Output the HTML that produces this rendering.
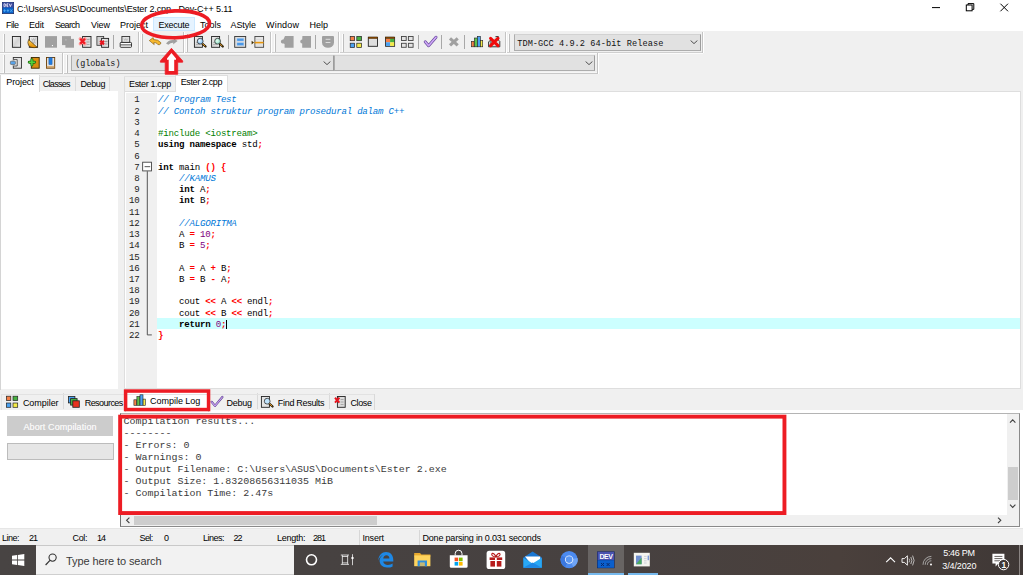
<!DOCTYPE html>
<html><head><meta charset="utf-8"><title>Dev-C++</title>
<style>
html,body{margin:0;padding:0;}
body{width:1023px;height:575px;overflow:hidden;position:relative;background:#f0f0f0;font-family:"Liberation Sans",sans-serif;font-size:9px;}
body div, body span.t, body svg{position:absolute;}
span.t{white-space:pre;}
.code{position:absolute;white-space:pre;font-family:"Liberation Mono",monospace;}
.code i{font-style:italic;}
.code b{font-weight:bold;}
</style></head><body>
<div style="left:0px;top:0px;width:1023px;height:30.7px;background:#fff;"></div>
<svg style="left:1.5px;top:2px" width="12" height="12" viewBox="0 0 12 12"><rect x=".3" y=".3" width="11.4" height="11.4" fill="#0a62c8" stroke="#1c2458" stroke-width=".7"/><rect x=".6" y=".6" width="10.8" height="4.9" fill="#3e4a9e"/>
<path d="M2 1.8V4.6M2 1.8H2.8Q3.7 1.8 3.7 3.2Q3.7 4.6 2.8 4.6H2M6.3 1.8H4.9V4.6H6.3M4.9 3.2H6M7.3 1.8L8.4 4.6L9.5 1.8" fill="none" stroke="#f4f4ff" stroke-width=".8"/>
<path d="M2.6 7.2V10M1.4 8.6H3.8M5.9 7.2V10M4.7 8.6H7.1M8.2 7.3L10.4 9.9M10.4 7.3L8.2 9.9" stroke="#58b0f4" stroke-width=".8"/></svg>
<span class="t" style="left:17px;top:2.90px;line-height:12px;font-size:9px;color:#000;font-family:'Liberation Sans',sans-serif;letter-spacing:-0.121px;">C:\Users\ASUS\Documents\Ester 2.cpp - Dev-C++ 5.11</span>
<svg style="left:925px;top:0" width="98" height="16" viewBox="0 0 98 16" fill="none" stroke="#000" stroke-width="1">
<path d="M7 7.6H15"/><rect x="41.3" y="5" width="5.8" height="5.8"/><path d="M43 5V3.6H48.8V9.4H47.2"/>
<path d="M75.4 3.7L83 11.3M83 3.7L75.4 11.3"/></svg>
<div style="left:153.2px;top:17.2px;width:41.6px;height:14.1px;background:#e5f3ff;border:1px solid #cce8ff;box-sizing:border-box;"></div>
<span class="t" style="left:6px;top:18.70px;line-height:12px;font-size:9px;color:#000;font-family:'Liberation Sans',sans-serif;letter-spacing:-0.505px;">File</span>
<span class="t" style="left:29px;top:18.70px;line-height:12px;font-size:9px;color:#000;font-family:'Liberation Sans',sans-serif;letter-spacing:-0.172px;">Edit</span>
<span class="t" style="left:55px;top:18.70px;line-height:12px;font-size:9px;color:#000;font-family:'Liberation Sans',sans-serif;letter-spacing:-0.706px;">Search</span>
<span class="t" style="left:91px;top:18.70px;line-height:12px;font-size:9px;color:#000;font-family:'Liberation Sans',sans-serif;letter-spacing:-0.120px;">View</span>
<span class="t" style="left:120px;top:18.70px;line-height:12px;font-size:9px;color:#000;font-family:'Liberation Sans',sans-serif;letter-spacing:-0.003px;">Project</span>
<span class="t" style="left:158.5px;top:18.70px;line-height:12px;font-size:9px;color:#000;font-family:'Liberation Sans',sans-serif;letter-spacing:-0.255px;">Execute</span>
<span class="t" style="left:200px;top:18.70px;line-height:12px;font-size:9px;color:#000;font-family:'Liberation Sans',sans-serif;letter-spacing:-0.004px;">Tools</span>
<span class="t" style="left:230.5px;top:18.70px;line-height:12px;font-size:9px;color:#000;font-family:'Liberation Sans',sans-serif;letter-spacing:-0.103px;">AStyle</span>
<span class="t" style="left:266px;top:18.70px;line-height:12px;font-size:9px;color:#000;font-family:'Liberation Sans',sans-serif;letter-spacing:0.197px;">Window</span>
<span class="t" style="left:309.5px;top:18.70px;line-height:12px;font-size:9px;color:#000;font-family:'Liberation Sans',sans-serif;letter-spacing:-0.005px;">Help</span>
<div style="left:0px;top:52px;width:703px;height:1px;background:#cfcfcf;"></div>
<div style="left:0px;top:53px;width:703px;height:1px;background:#fbfbfb;"></div>
<div style="left:2.8px;top:33.7px;width:1px;height:18px;background:#fdfdfd;"></div>
<div style="left:3.8px;top:33.7px;width:1px;height:18px;background:#bdbdbd;"></div>
<div style="left:141.4px;top:33.7px;width:1px;height:18px;background:#fdfdfd;"></div>
<div style="left:142.4px;top:33.7px;width:1px;height:18px;background:#bdbdbd;"></div>
<div style="left:186.20000000000002px;top:33.7px;width:1px;height:18px;background:#fdfdfd;"></div>
<div style="left:187.20000000000002px;top:33.7px;width:1px;height:18px;background:#bdbdbd;"></div>
<div style="left:274.0px;top:33.7px;width:1px;height:18px;background:#fdfdfd;"></div>
<div style="left:275.0px;top:33.7px;width:1px;height:18px;background:#bdbdbd;"></div>
<div style="left:342.2px;top:33.7px;width:1px;height:18px;background:#fdfdfd;"></div>
<div style="left:343.2px;top:33.7px;width:1px;height:18px;background:#bdbdbd;"></div>
<div style="left:508.4px;top:33.7px;width:1px;height:18px;background:#fdfdfd;"></div>
<div style="left:509.4px;top:33.7px;width:1px;height:18px;background:#bdbdbd;"></div>
<div style="left:138.2px;top:32px;width:1px;height:21px;background:#c4c4c4;"></div>
<div style="left:139.2px;top:32px;width:1px;height:21px;background:#fff;"></div>
<div style="left:182.6px;top:32px;width:1px;height:21px;background:#c4c4c4;"></div>
<div style="left:183.6px;top:32px;width:1px;height:21px;background:#fff;"></div>
<div style="left:270px;top:32px;width:1px;height:21px;background:#c4c4c4;"></div>
<div style="left:271px;top:32px;width:1px;height:21px;background:#fff;"></div>
<div style="left:338px;top:32px;width:1px;height:21px;background:#c4c4c4;"></div>
<div style="left:339px;top:32px;width:1px;height:21px;background:#fff;"></div>
<div style="left:505px;top:32px;width:1px;height:21px;background:#c4c4c4;"></div>
<div style="left:506px;top:32px;width:1px;height:21px;background:#fff;"></div>
<div style="left:701.6px;top:32px;width:1px;height:21px;background:#c4c4c4;"></div>
<div style="left:702.6px;top:32px;width:1px;height:21px;background:#fff;"></div>
<div style="left:113px;top:35px;width:1px;height:14px;background:#a8a8a8;"></div>
<div style="left:228px;top:35px;width:1px;height:14px;background:#a8a8a8;"></div>
<div style="left:315px;top:35px;width:1px;height:14px;background:#a8a8a8;"></div>
<div style="left:418px;top:35px;width:1px;height:14px;background:#a8a8a8;"></div>
<div style="left:441px;top:35px;width:1px;height:14px;background:#a8a8a8;"></div>
<div style="left:464px;top:35px;width:1px;height:14px;background:#a8a8a8;"></div>
<svg style="left:0;top:0" width="1023" height="80" viewBox="0 0 1023 80">
<defs>
<linearGradient id="pg" x1="0" y1="0" x2="1" y2="1"><stop offset="0" stop-color="#f4f4f4"/><stop offset=".5" stop-color="#d4d4d4"/><stop offset="1" stop-color="#ececec"/></linearGradient>
<linearGradient id="or" x1="0" y1="0" x2="0" y2="1"><stop offset="0" stop-color="#ffd35a"/><stop offset="1" stop-color="#e08a00"/></linearGradient>
<radialGradient id="lens" cx=".4" cy=".4" r=".7"><stop offset="0" stop-color="#e8f6ff"/><stop offset="1" stop-color="#6db4ee"/></radialGradient>
<radialGradient id="lensg" cx=".4" cy=".4" r=".7"><stop offset="0" stop-color="#e8fff0"/><stop offset="1" stop-color="#7fd6c0"/></radialGradient>
</defs>
<!-- new -->
<rect x="12.4" y="36.5" width="8.2" height="10.8" fill="url(#pg)" stroke="#222" stroke-width=".9"/>
<!-- open -->
<rect x="29.3" y="36.5" width="8.3" height="10.8" fill="url(#pg)" stroke="#222" stroke-width=".9"/>
<path d="M31.5 38.5l1 2 1-2 1 2 1-2M32.5 41.5l1 2 1-2 1 2" stroke="#999" stroke-width=".5" fill="none"/>
<path d="M28.6 39.6L37.2 47.3Q31 48.6 28.6 45.4Q27 42.6 28.6 39.6Z" fill="url(#or)" stroke="#3a2500" stroke-width=".6"/>
<!-- save gray -->
<rect x="45" y="36.1" width="12" height="11.6" fill="#a0a0a0"/><rect x="51.9" y="45" width="1.1" height="1.1" fill="#fff"/>
<!-- save all gray -->
<rect x="62" y="36.1" width="9" height="9" fill="#a0a0a0"/><rect x="65.4" y="38.9" width="8.6" height="8.8" fill="#a0a0a0"/><rect x="65.6" y="39" width=".7" height="1.6" fill="#c8c8c8"/>
<!-- close -->
<rect x="82.6" y="36.5" width="8.4" height="10.8" fill="url(#pg)" stroke="#222" stroke-width=".9"/>
<path d="M86.5 39.5h3M86.5 42h3M86.5 44.5h3" stroke="#888" stroke-width=".6"/>
<path d="M80.3 38.8L84.9 43.8M84.9 38.8L80.3 43.8" stroke="#ff9a9a" stroke-width="3.4" stroke-linecap="round"/>
<path d="M80.3 38.8L84.9 43.8M84.9 38.8L80.3 43.8" stroke="#ee1c24" stroke-width="2.3" stroke-linecap="butt"/>
<!-- close all -->
<rect x="96.9" y="36.5" width="6.8" height="8.8" fill="#cfcfcf" stroke="#333" stroke-width=".8"/>
<rect x="101.6" y="38.4" width="7" height="8.9" fill="url(#pg)" stroke="#222" stroke-width=".9"/>
<path d="M105 41.5h2.5M105 44h2.5" stroke="#777" stroke-width=".6"/>
<path d="M100.2 40.7L104 44.5M104 40.7L100.2 44.5" stroke="#e8141e" stroke-width="2.2" stroke-linecap="butt"/>
<!-- print -->
<rect x="121.9" y="36.5" width="7.8" height="6" fill="#e2e2e2" stroke="#333" stroke-width=".9"/>
<path d="M123.8 38.5l1 2 1-2 1 2 1-2" stroke="#999" stroke-width=".5" fill="none"/>
<rect x="120.2" y="42.4" width="11.3" height="4.9" rx=".8" fill="#fff" stroke="#222" stroke-width=".9"/>
<path d="M120.5 44.9h10.8" stroke="#333" stroke-width=".9"/>
<!-- undo -->
<path d="M149.3 40.6L153.2 37.6L153.6 39.6Q158 39.2 160.8 42.6Q161.2 44.2 159.4 44.7Q157.4 45 157.2 43.6Q155.6 42.4 153.8 42.6L154.2 44.6Z" fill="#f7b82e" stroke="#7a4f00" stroke-width=".6" stroke-linejoin="round"/>
<!-- redo gray -->
<path d="M177.6 41L174 38.6L173.6 40Q169 39.6 166 43.4L168.4 44.8Q170.6 42.6 173.4 42.8L173 44.6Z" fill="#a0a0a0"/>
<!-- find -->
<rect x="194.4" y="36.5" width="8" height="10.8" fill="url(#pg)" stroke="#222" stroke-width=".9"/>
<path d="M196 44.5h4M196 42.5h2" stroke="#999" stroke-width=".6"/>
<path d="M202.2 43.4L205.6 46.6" stroke="#1a1200" stroke-width="2.1" stroke-linecap="round"/>
<path d="M202.2 43.4L205 46" stroke="#f0a020" stroke-width="1" stroke-linecap="round"/>
<circle cx="200.2" cy="41.2" r="2.9" fill="url(#lens)" stroke="#333" stroke-width=".8"/>
<!-- replace -->
<rect x="211.6" y="36.5" width="8" height="10.8" fill="url(#pg)" stroke="#222" stroke-width=".9"/>
<path d="M213 44.5h4M213 42.5h2" stroke="#999" stroke-width=".6"/>
<path d="M219.6 43.4L222.8 46.6" stroke="#1a1200" stroke-width="2.1" stroke-linecap="round"/>
<path d="M219.6 43.4L222.2 46" stroke="#f0a020" stroke-width="1" stroke-linecap="round"/>
<circle cx="217.6" cy="41.2" r="2.9" fill="url(#lensg)" stroke="#333" stroke-width=".8"/>
<!-- goto func -->
<rect x="234.7" y="36.5" width="11" height="10.8" fill="#dedede" stroke="#333" stroke-width=".9"/>
<rect x="237" y="38.4" width="6.8" height="2.6" fill="#4a98e8" stroke="#9fc9f5" stroke-width=".4"/><rect x="237" y="42.8" width="6.8" height="2.6" fill="#4a98e8" stroke="#9fc9f5" stroke-width=".4"/>
<!-- goto line -->
<rect x="254.9" y="36.5" width="8.7" height="10.8" fill="#e6e6e6" stroke="#444" stroke-width=".9"/>
<path d="M255.3 39.6h8M255.3 45h8" stroke="#cfcfcf" stroke-width=".5"/>
<path d="M254.6 42.6H263.6" stroke="#e8960a" stroke-width="1.6"/>
<path d="M251.6 40.8L254 42.6L251.6 44.4Z" fill="#3a2a00"/>
<!-- gray icons -->
<path d="M285 36.1H293.6V47.7H284.6V44L283.6 43.4A2 2 0 1 1 283.4 39.6Z" fill="#a0a0a0"/>
<path d="M302.4 36.1H311V47.7H302.2V43.6A1.9 1.9 0 1 1 302.2 39.6Z" fill="#a0a0a0"/>
<path d="M323 36.1H333A1 1 0 0 1 334 37.1V42.5A6 5.3 0 0 1 322 42.5V37.1A1 1 0 0 1 323 36.1Z" fill="#a0a0a0"/>
<path d="M325.6 39.3H330.4M325.6 42.5H330.4" stroke="#e4e4e4" stroke-width=".9"/>
<!-- compile -->
<g stroke="#222" stroke-width=".7">
<rect x="350.2" y="36.4" width="4.4" height="4.3" fill="#f58048"/><rect x="356.8" y="36.4" width="4.7" height="4.3" fill="#46b040"/>
<rect x="350.2" y="43.2" width="4.4" height="4.3" fill="#4aa2f2"/><rect x="356.8" y="43.2" width="4.7" height="4.3" fill="#f4ea48"/>
</g>
<!-- run -->
<rect x="368.3" y="37.3" width="9.2" height="9" fill="#dedede" stroke="#222" stroke-width=".9"/>
<rect x="368.3" y="37" width="9.2" height="1.6" fill="#8a4a00" stroke="#3a2000" stroke-width=".4"/>
<!-- compile+run -->
<rect x="385.6" y="37.3" width="9" height="9" fill="#dedede" stroke="#222" stroke-width=".9"/>
<rect x="386" y="38.6" width="4.1" height="3.7" fill="#f58048"/><rect x="390.1" y="38.6" width="4.1" height="3.7" fill="#46b040"/>
<rect x="386" y="42.3" width="4.1" height="3.6" fill="#4aa2f2"/><rect x="390.1" y="42.3" width="4.1" height="3.6" fill="#f4ea48"/>
<rect x="385.6" y="37" width="9" height="1.6" fill="#8a4a00" stroke="#3a2000" stroke-width=".4"/>
<!-- rebuild -->
<g stroke="#444" stroke-width=".9" fill="#e4e4e4">
<rect x="401.5" y="36.5" width="4.7" height="4"/><rect x="408.4" y="36.5" width="4.7" height="4"/>
<rect x="401.5" y="43.3" width="4.7" height="4"/><rect x="408.4" y="43.3" width="4.7" height="4"/>
</g>
<!-- check -->
<path d="M425.2 41.8L428.6 45.7L436 37.2" fill="none" stroke="#66489a" stroke-width="2.9" stroke-linecap="round" stroke-linejoin="round"/>
<path d="M425.2 41.8L428.6 45.7L436 37.2" fill="none" stroke="#cfa8f8" stroke-width="1.6" stroke-linecap="round" stroke-linejoin="round"/>
<!-- gray x -->
<path d="M450 38.3L457.7 45.4M457.7 38.3L450 45.4" stroke="#a0a0a0" stroke-width="3.1"/>
<!-- chart -->
<g stroke="#222" stroke-width=".6">
<rect x="471.3" y="41.3" width="2.8" height="5.5" fill="#f58048"/><rect x="474.3" y="38" width="3" height="8.8" fill="#5cc04c"/>
<rect x="477.4" y="36.3" width="3" height="10.5" fill="#4aa2f2"/><rect x="480.5" y="40.6" width="2.2" height="6.2" fill="#f4ea48"/>
</g>
<!-- chart red x -->
<path d="M488.6 46.8V42L491 39.5V46.8M495.5 36.6H498.4V40L499.8 41.5V46.8H488.6" fill="#ddd" stroke="#222" stroke-width=".9"/>
<path d="M490.6 38.4L498 45.6M498 38.4L490.6 45.6" stroke="#f00a0a" stroke-width="3.1" stroke-linecap="round"/>
</svg>
<div style="left:0px;top:73px;width:598px;height:1px;background:#c8c8c8;"></div>
<div style="left:0px;top:72px;width:598px;height:1px;background:#f6f6f6;"></div>
<div style="left:2.8px;top:54.7px;width:1px;height:18px;background:#fdfdfd;"></div>
<div style="left:3.8px;top:54.7px;width:1px;height:18px;background:#bdbdbd;"></div>
<div style="left:65.80000000000001px;top:54.7px;width:1px;height:18px;background:#fdfdfd;"></div>
<div style="left:66.80000000000001px;top:54.7px;width:1px;height:18px;background:#bdbdbd;"></div>
<div style="left:61.8px;top:53px;width:1px;height:21px;background:#c4c4c4;"></div>
<div style="left:62.8px;top:53px;width:1px;height:21px;background:#fff;"></div>
<div style="left:596.6px;top:53px;width:1px;height:21px;background:#c4c4c4;"></div>
<div style="left:597.6px;top:53px;width:1px;height:21px;background:#fff;"></div>
<div style="left:71px;top:54.9px;width:262.8px;height:15.8px;background:#e1e1e1;border:1px solid #adadad;border-top-color:#d2d2d2;border-right-color:#9c9c9c;box-sizing:border-box;"></div>
<svg style="left:323.40px;top:60.90px" width="8" height="5" viewBox="0 0 8 5"><path d="M.6 .5L4 3.6L7.4 .5" fill="none" stroke="#505050" stroke-width="1"/></svg>
<span class="t" style="left:75.2px;top:58.10px;line-height:12px;font-size:8.4px;color:#111;font-family:'Liberation Mono',monospace;">(globals)</span>
<div style="left:334.2px;top:54.9px;width:261px;height:15.8px;background:#e1e1e1;border:1px solid #adadad;border-top-color:#d2d2d2;border-right-color:#9c9c9c;box-sizing:border-box;"></div>
<svg style="left:584.80px;top:60.90px" width="8" height="5" viewBox="0 0 8 5"><path d="M.6 .5L4 3.6L7.4 .5" fill="none" stroke="#505050" stroke-width="1"/></svg>
<div style="left:514px;top:34px;width:186.5px;height:16.5px;background:#e1e1e1;border:1px solid #adadad;border-top-color:#d2d2d2;border-right-color:#9c9c9c;box-sizing:border-box;"></div>
<svg style="left:690.10px;top:40.35px" width="8" height="5" viewBox="0 0 8 5"><path d="M.6 .5L4 3.6L7.4 .5" fill="none" stroke="#505050" stroke-width="1"/></svg>
<span class="t" style="left:517.2px;top:37.55px;line-height:12px;font-size:8.6px;color:#111;font-family:'Liberation Mono',monospace;letter-spacing:0.063px;">TDM-GCC 4.9.2 64-bit Release</span>
<svg style="left:0;top:0" width="80" height="80" viewBox="0 0 80 80">
<rect x="13.3" y="57.5" width="8.2" height="10.7" fill="#e2e2e2" stroke="#333" stroke-width=".9"/>
<rect x="13.3" y="59.5" width="4" height="6.6" fill="#f0f0f0"/>
<path d="M13.3 59.6H17.2V66H13.3" fill="none" stroke="#333" stroke-width=".8"/>
<rect x="10.4" y="61.2" width="5" height="3.2" rx=".6" fill="#5aa6ee" stroke="#555" stroke-width=".6"/>
<rect x="31.3" y="57.5" width="7.9" height="10.7" fill="#d98c10" stroke="#3a2500" stroke-width=".9"/>
<path d="M31.9 59.6V65M29.2 62.3H34.6" stroke="#1d6b12" stroke-width="2.9" stroke-linecap="round"/>
<path d="M31.9 59.7V64.9M29.3 62.3H34.5" stroke="#55d23c" stroke-width="1.6" stroke-linecap="round"/>
<rect x="46.5" y="57.5" width="8.2" height="10.7" fill="#e0e0e0" stroke="#6a3c00" stroke-width=".9"/>
<path d="M46.6 67H54.6" stroke="#c88a3a" stroke-width="1.2"/>
<rect x="48.9" y="57.6" width="3.2" height="7" fill="#1f7ce0" stroke="#0f4a9a" stroke-width=".4"/>
</svg>
<div style="left:0px;top:91px;width:118px;height:298px;background:#fff;"></div>
<div style="left:0px;top:74.5px;width:38.6px;height:17px;background:#fff;border-right:1px solid #d9d9d9;"></div>
<div style="left:75px;top:76px;width:1px;height:15px;background:#dcdcdc;"></div>
<div style="left:109.3px;top:76px;width:1px;height:15px;background:#dcdcdc;"></div>
<div style="left:39px;top:75.6px;width:71px;height:1px;background:#e2e2e2;"></div>
<div style="left:0px;top:74.5px;width:0.8px;height:315px;background:#d4d4d4;"></div>
<span class="t" style="left:6.3px;top:75.60px;line-height:12px;font-size:9px;color:#000;font-family:'Liberation Sans',sans-serif;letter-spacing:-0.103px;">Project</span>
<span class="t" style="left:42.8px;top:78.10px;line-height:12px;font-size:9px;color:#000;font-family:'Liberation Sans',sans-serif;letter-spacing:-0.719px;">Classes</span>
<span class="t" style="left:80.5px;top:78.10px;line-height:12px;font-size:9px;color:#000;font-family:'Liberation Sans',sans-serif;letter-spacing:-0.383px;">Debug</span>
<div style="left:124px;top:90.8px;width:897.4px;height:298.4px;background:#fff;border:1px solid #dedede;box-sizing:border-box;"></div>
<div style="left:175px;top:74.8px;width:53.2px;height:17.5px;background:#fff;border:1px solid #dedede;border-bottom:none;box-sizing:border-box;"></div>
<div style="left:124.4px;top:76px;width:1px;height:15px;background:#dcdcdc;"></div>
<div style="left:124.4px;top:75.8px;width:51px;height:1px;background:#e2e2e2;"></div>
<span class="t" style="left:129px;top:78.10px;line-height:12px;font-size:9px;color:#000;font-family:'Liberation Sans',sans-serif;letter-spacing:-0.333px;">Ester 1.cpp</span>
<span class="t" style="left:180.7px;top:75.60px;line-height:12px;font-size:9px;color:#000;font-family:'Liberation Sans',sans-serif;letter-spacing:-0.373px;">Ester 2.cpp</span>
<div style="left:126px;top:93px;width:30.5px;height:295px;background:#f0f0f0;"></div>
<div style="left:157px;top:318.2px;width:863.4px;height:10.9px;background:#ccffff;"></div>
<div class="code" style="left:134.36px;top:94.40px;font-size:9.1px;letter-spacing:-0.217px;line-height:11.224px;color:#222">1</div>
<div class="code" style="left:158px;top:94.40px;font-size:9.1px;letter-spacing:-0.217px;line-height:11.224px;color:#000"><i style="color:#0078d7">// Program Test</i></div>
<div class="code" style="left:134.36px;top:105.62px;font-size:9.1px;letter-spacing:-0.217px;line-height:11.224px;color:#222">2</div>
<div class="code" style="left:158px;top:105.62px;font-size:9.1px;letter-spacing:-0.217px;line-height:11.224px;color:#000"><i style="color:#0078d7">// Contoh struktur program prosedural dalam C++</i></div>
<div class="code" style="left:134.36px;top:116.85px;font-size:9.1px;letter-spacing:-0.217px;line-height:11.224px;color:#222">3</div>
<div class="code" style="left:134.36px;top:128.07px;font-size:9.1px;letter-spacing:-0.217px;line-height:11.224px;color:#222">4</div>
<div class="code" style="left:158px;top:128.07px;font-size:9.1px;letter-spacing:-0.217px;line-height:11.224px;color:#000"><span style="color:#008000">#include &lt;iostream&gt;</span></div>
<div class="code" style="left:134.36px;top:139.30px;font-size:9.1px;letter-spacing:-0.217px;line-height:11.224px;color:#222">5</div>
<div class="code" style="left:158px;top:139.30px;font-size:9.1px;letter-spacing:-0.217px;line-height:11.224px;color:#000"><b>using namespace</b> std<b style="color:#ff0000">;</b></div>
<div class="code" style="left:134.36px;top:150.52px;font-size:9.1px;letter-spacing:-0.217px;line-height:11.224px;color:#222">6</div>
<div class="code" style="left:134.36px;top:161.74px;font-size:9.1px;letter-spacing:-0.217px;line-height:11.224px;color:#222">7</div>
<div class="code" style="left:158px;top:161.74px;font-size:9.1px;letter-spacing:-0.217px;line-height:11.224px;color:#000"><b>int</b> main <b style="color:#ff0000">()</b> <b style="color:#ff0000">{</b></div>
<div class="code" style="left:134.36px;top:172.97px;font-size:9.1px;letter-spacing:-0.217px;line-height:11.224px;color:#222">8</div>
<div class="code" style="left:158px;top:172.97px;font-size:9.1px;letter-spacing:-0.217px;line-height:11.224px;color:#000">    <i style="color:#0078d7">//KAMUS</i></div>
<div class="code" style="left:134.36px;top:184.19px;font-size:9.1px;letter-spacing:-0.217px;line-height:11.224px;color:#222">9</div>
<div class="code" style="left:158px;top:184.19px;font-size:9.1px;letter-spacing:-0.217px;line-height:11.224px;color:#000">    <b>int</b> A<b style="color:#ff0000">;</b></div>
<div class="code" style="left:129.11px;top:195.42px;font-size:9.1px;letter-spacing:-0.217px;line-height:11.224px;color:#222">10</div>
<div class="code" style="left:158px;top:195.42px;font-size:9.1px;letter-spacing:-0.217px;line-height:11.224px;color:#000">    <b>int</b> B<b style="color:#ff0000">;</b></div>
<div class="code" style="left:129.11px;top:206.64px;font-size:9.1px;letter-spacing:-0.217px;line-height:11.224px;color:#222">11</div>
<div class="code" style="left:129.11px;top:217.86px;font-size:9.1px;letter-spacing:-0.217px;line-height:11.224px;color:#222">12</div>
<div class="code" style="left:158px;top:217.86px;font-size:9.1px;letter-spacing:-0.217px;line-height:11.224px;color:#000">    <i style="color:#0078d7">//ALGORITMA</i></div>
<div class="code" style="left:129.11px;top:229.09px;font-size:9.1px;letter-spacing:-0.217px;line-height:11.224px;color:#222">13</div>
<div class="code" style="left:158px;top:229.09px;font-size:9.1px;letter-spacing:-0.217px;line-height:11.224px;color:#000">    A <b style="color:#ff0000">=</b> <span style="color:#800080">10</span><b style="color:#ff0000">;</b></div>
<div class="code" style="left:129.11px;top:240.31px;font-size:9.1px;letter-spacing:-0.217px;line-height:11.224px;color:#222">14</div>
<div class="code" style="left:158px;top:240.31px;font-size:9.1px;letter-spacing:-0.217px;line-height:11.224px;color:#000">    B <b style="color:#ff0000">=</b> <span style="color:#800080">5</span><b style="color:#ff0000">;</b></div>
<div class="code" style="left:129.11px;top:251.54px;font-size:9.1px;letter-spacing:-0.217px;line-height:11.224px;color:#222">15</div>
<div class="code" style="left:129.11px;top:262.76px;font-size:9.1px;letter-spacing:-0.217px;line-height:11.224px;color:#222">16</div>
<div class="code" style="left:158px;top:262.76px;font-size:9.1px;letter-spacing:-0.217px;line-height:11.224px;color:#000">    A <b style="color:#ff0000">=</b> A <b style="color:#ff0000">+</b> B<b style="color:#ff0000">;</b></div>
<div class="code" style="left:129.11px;top:273.98px;font-size:9.1px;letter-spacing:-0.217px;line-height:11.224px;color:#222">17</div>
<div class="code" style="left:158px;top:273.98px;font-size:9.1px;letter-spacing:-0.217px;line-height:11.224px;color:#000">    B <b style="color:#ff0000">=</b> B <b style="color:#ff0000">-</b> A<b style="color:#ff0000">;</b></div>
<div class="code" style="left:129.11px;top:285.21px;font-size:9.1px;letter-spacing:-0.217px;line-height:11.224px;color:#222">18</div>
<div class="code" style="left:129.11px;top:296.43px;font-size:9.1px;letter-spacing:-0.217px;line-height:11.224px;color:#222">19</div>
<div class="code" style="left:158px;top:296.43px;font-size:9.1px;letter-spacing:-0.217px;line-height:11.224px;color:#000">    cout <b style="color:#ff0000">&lt;&lt;</b> A <b style="color:#ff0000">&lt;&lt;</b> endl<b style="color:#ff0000">;</b></div>
<div class="code" style="left:129.11px;top:307.66px;font-size:9.1px;letter-spacing:-0.217px;line-height:11.224px;color:#222">20</div>
<div class="code" style="left:158px;top:307.66px;font-size:9.1px;letter-spacing:-0.217px;line-height:11.224px;color:#000">    cout <b style="color:#ff0000">&lt;&lt;</b> B <b style="color:#ff0000">&lt;&lt;</b> endl<b style="color:#ff0000">;</b></div>
<div class="code" style="left:129.11px;top:318.88px;font-size:9.1px;letter-spacing:-0.217px;line-height:11.224px;color:#222">21</div>
<div class="code" style="left:158px;top:318.88px;font-size:9.1px;letter-spacing:-0.217px;line-height:11.224px;color:#000">    <b>return</b> <span style="color:#800080">0</span><b style="color:#ff0000">;</b></div>
<div class="code" style="left:129.11px;top:330.10px;font-size:9.1px;letter-spacing:-0.217px;line-height:11.224px;color:#222">22</div>
<div class="code" style="left:158px;top:330.10px;font-size:9.1px;letter-spacing:-0.217px;line-height:11.224px;color:#000"><b style="color:#ff0000">}</b></div>
<div style="left:226.2px;top:319.6px;width:1px;height:9.2px;background:#000;"></div>
<svg style="left:140px;top:90px" width="16" height="260" viewBox="140 90 16 260" fill="none" stroke="#444" stroke-width=".9">
<rect x="142.65" y="162.21" width="8.9" height="8.7" fill="#fff"/><path d="M144.6 166.66H150.2"/>
<path d="M147.3 171.26V334.92H151.8"/></svg>
<div style="left:0px;top:410px;width:1023px;height:118.3px;background:#fff;"></div>
<div style="left:125px;top:391px;width:83.5px;height:21px;background:#fff;border:1px solid #d9d9d9;border-bottom:none;box-sizing:border-box;"></div>
<div style="left:63px;top:393px;width:1px;height:16px;background:#d9d9d9;"></div>
<div style="left:256.5px;top:393px;width:1px;height:16px;background:#d9d9d9;"></div>
<div style="left:329px;top:393px;width:1px;height:16px;background:#d9d9d9;"></div>
<div style="left:374px;top:394px;width:1px;height:16px;background:#d9d9d9;"></div>
<div style="left:1px;top:393.6px;width:373px;height:1px;background:#e2e2e2;"></div>
<div style="left:0.5px;top:394px;width:1px;height:16px;background:#e2e2e2;"></div>
<span class="t" style="left:22.9px;top:396.60px;line-height:12px;font-size:9px;color:#000;font-family:'Liberation Sans',sans-serif;letter-spacing:-0.045px;">Compiler</span>
<span class="t" style="left:84.7px;top:396.60px;line-height:12px;font-size:9px;color:#000;font-family:'Liberation Sans',sans-serif;letter-spacing:-0.554px;">Resources</span>
<span class="t" style="left:150.1px;top:395.20px;line-height:12px;font-size:9px;color:#000;font-family:'Liberation Sans',sans-serif;letter-spacing:-0.033px;">Compile Log</span>
<span class="t" style="left:226.5px;top:396.60px;line-height:12px;font-size:9px;color:#000;font-family:'Liberation Sans',sans-serif;letter-spacing:-0.258px;">Debug</span>
<span class="t" style="left:277.8px;top:396.60px;line-height:12px;font-size:9px;color:#000;font-family:'Liberation Sans',sans-serif;letter-spacing:-0.303px;">Find Results</span>
<span class="t" style="left:350.5px;top:396.60px;line-height:12px;font-size:9px;color:#000;font-family:'Liberation Sans',sans-serif;letter-spacing:-0.379px;">Close</span>
<svg style="left:0;top:390px" width="380" height="24" viewBox="0 390 380 24">
<g stroke="#222" stroke-width=".7">
<rect x="6.4" y="396.2" width="4.4" height="4.3" fill="#f58048"/><rect x="13" y="396.2" width="4.7" height="4.3" fill="#46b040"/>
<rect x="6.4" y="403" width="4.4" height="4.3" fill="#4aa2f2"/><rect x="13" y="403" width="4.7" height="4.3" fill="#f4ea48"/>
</g>
<rect x="68.4" y="396.4" width="6.5" height="6.5" fill="#4aa2f2" stroke="#222" stroke-width=".8"/>
<rect x="70.6" y="398.6" width="6.5" height="6.5" fill="#46b040" stroke="#222" stroke-width=".8"/>
<rect x="72.8" y="400.8" width="6.5" height="6.5" fill="#e8321e" stroke="#222" stroke-width=".8"/>
<g stroke="#222" stroke-width=".6">
<rect x="133.9" y="399.8" width="2.8" height="5.5" fill="#f58048"/><rect x="136.9" y="396.5" width="3" height="8.8" fill="#5cc04c"/>
<rect x="140" y="394.8" width="3" height="10.5" fill="#4aa2f2"/><rect x="143.1" y="399.1" width="2.2" height="6.2" fill="#f4ea48"/>
</g>
<path d="M211.6 401.8L215 405.9L222.4 397" fill="none" stroke="#5b3f8c" stroke-width="2.2" stroke-linecap="round" stroke-linejoin="round"/>
<path d="M211.6 401.8L215 405.9L222.4 397" fill="none" stroke="#c9a2f4" stroke-width="1.1" stroke-linecap="round" stroke-linejoin="round"/>
<rect x="261.4" y="396.5" width="8" height="10.8" fill="#e4e4e4" stroke="#222" stroke-width=".9"/>
<path d="M269.2 403.4L272.6 406.6" stroke="#1a1200" stroke-width="2.1" stroke-linecap="round"/>
<path d="M269.2 403.4L272 406" stroke="#f0a020" stroke-width="1" stroke-linecap="round"/>
<circle cx="267.2" cy="401.2" r="2.9" fill="#bfe2fa" stroke="#333" stroke-width=".8"/>
<rect x="337.4" y="396.5" width="7.8" height="10.8" fill="#dcdcdc" stroke="#222" stroke-width=".9"/>
<path d="M340.6 399.5h3M340.6 402h3M340.6 404.5h3" stroke="#888" stroke-width=".6"/>
<path d="M335 397.8L339.4 402.6M339.4 397.8L335 402.6" stroke="#e8141e" stroke-width="2" stroke-linecap="butt"/>
</svg>
<div style="left:6.6px;top:416.3px;width:106.4px;height:20.2px;background:#cccccc;"></div>
<span class="t" style="left:23.5px;top:421.40px;line-height:12px;font-size:9px;color:#f4f4f4;font-family:'Liberation Sans',sans-serif;letter-spacing:0.091px;text-shadow:0 0 .6px #fff;">Abort Compilation</span>
<div style="left:6.6px;top:442.8px;width:107px;height:17.2px;background:#e6e6e6;border:1px solid #bcbcbc;box-sizing:border-box;"></div>
<div style="left:119.6px;top:412.8px;width:900.4px;height:114px;background:#fff;border:1px solid #8a8a8a;border-top-color:#b4b4b4;border-left-color:#707070;box-sizing:border-box;"></div>
<div class="code" style="left:123.6px;top:415.50px;font-size:9.98px;line-height:12px;color:#3a3a3a">Compilation results...</div>
<div class="code" style="left:123.6px;top:427.50px;font-size:9.98px;line-height:12px;color:#3a3a3a">--------</div>
<div class="code" style="left:123.6px;top:439.50px;font-size:9.98px;line-height:12px;color:#3a3a3a">- Errors: 0</div>
<div class="code" style="left:123.6px;top:451.50px;font-size:9.98px;line-height:12px;color:#3a3a3a">- Warnings: 0</div>
<div class="code" style="left:123.6px;top:463.50px;font-size:9.98px;line-height:12px;color:#3a3a3a">- Output Filename: C:\Users\ASUS\Documents\Ester 2.exe</div>
<div class="code" style="left:123.6px;top:475.50px;font-size:9.98px;line-height:12px;color:#3a3a3a">- Output Size: 1.83208656311035 MiB</div>
<div class="code" style="left:123.6px;top:487.50px;font-size:9.98px;line-height:12px;color:#3a3a3a">- Compilation Time: 2.47s</div>
<div style="left:1006.5px;top:413.5px;width:12.5px;height:101px;background:#f0f0f0;"></div>
<div style="left:1007.5px;top:467px;width:10.5px;height:32.5px;background:#cdcdcd;"></div>
<div style="left:121px;top:514.5px;width:898px;height:11.5px;background:#f0f0f0;"></div>
<div style="left:134px;top:515.5px;width:243px;height:9.5px;background:#cdcdcd;"></div>
<svg style="left:120px;top:412px" width="900" height="115" viewBox="120 412 900 115" fill="none" stroke="#404040" stroke-width="1.1">
<path d="M1010 422.6L1012.7 419.8L1015.4 422.6"/><path d="M1010 504.6L1012.7 507.4L1015.4 504.6"/>
<path d="M129.4 517.6L126.6 520.3L129.4 523"/><path d="M998 517.6L1000.8 520.3L998 523"/></svg>
<div style="left:0px;top:528.3px;width:1023px;height:18px;background:#f0f0f0;border-top:1px solid #e6e6e6;box-sizing:border-box;"></div>
<div style="left:359px;top:530px;width:1px;height:15px;background:#d7d7d7;"></div>
<div style="left:419px;top:530px;width:1px;height:15px;background:#d7d7d7;"></div>
<span class="t" style="left:2px;top:532.40px;line-height:12px;font-size:9px;color:#000;font-family:'Liberation Sans',sans-serif;letter-spacing:-0.508px;">Line:</span>
<span class="t" style="left:29px;top:532.40px;line-height:12px;font-size:9px;color:#000;font-family:'Liberation Sans',sans-serif;letter-spacing:-1.016px;">21</span>
<span class="t" style="left:72.5px;top:532.40px;line-height:12px;font-size:9px;color:#000;font-family:'Liberation Sans',sans-serif;letter-spacing:-0.339px;">Col:</span>
<span class="t" style="left:97px;top:532.40px;line-height:12px;font-size:9px;color:#000;font-family:'Liberation Sans',sans-serif;letter-spacing:-1.016px;">14</span>
<span class="t" style="left:139.5px;top:532.40px;line-height:12px;font-size:9px;color:#000;font-family:'Liberation Sans',sans-serif;letter-spacing:-0.605px;">Sel:</span>
<span class="t" style="left:164px;top:532.40px;line-height:12px;font-size:9px;color:#000;font-family:'Liberation Sans',sans-serif;letter-spacing:-0.416px;">0</span>
<span class="t" style="left:203px;top:532.40px;line-height:12px;font-size:9px;color:#000;font-family:'Liberation Sans',sans-serif;letter-spacing:-0.506px;">Lines:</span>
<span class="t" style="left:233.5px;top:532.40px;line-height:12px;font-size:9px;color:#000;font-family:'Liberation Sans',sans-serif;letter-spacing:-1.016px;">22</span>
<span class="t" style="left:277px;top:532.40px;line-height:12px;font-size:9px;color:#000;font-family:'Liberation Sans',sans-serif;letter-spacing:-0.255px;">Length:</span>
<span class="t" style="left:313px;top:532.40px;line-height:12px;font-size:9px;color:#000;font-family:'Liberation Sans',sans-serif;letter-spacing:-1.016px;">281</span>
<span class="t" style="left:362.5px;top:532.40px;line-height:12px;font-size:9px;color:#000;font-family:'Liberation Sans',sans-serif;letter-spacing:-0.203px;">Insert</span>
<span class="t" style="left:422.5px;top:532.40px;line-height:12px;font-size:9px;color:#000;font-family:'Liberation Sans',sans-serif;letter-spacing:-0.200px;">Done parsing in 0.031 seconds</span>
<div style="left:0px;top:545.4px;width:1023px;height:30px;background:linear-gradient(90deg,#484443 0%,#474241 30%,#474140 62%,#4a403c 82%,#3f3836 100%);"></div>
<div style="left:36px;top:545.4px;width:257.7px;height:29.6px;background:#f2f2f2;border-top:1px solid #c9c9c9;border-bottom:1px solid #cfcfcf;box-sizing:border-box;"></div>
<div style="left:588.2px;top:545.4px;width:35.7px;height:30px;background:#686463;"></div>
<div style="left:588.2px;top:573.4px;width:35.7px;height:1.6px;background:#76b9ed;"></div>
<div style="left:627.8px;top:573.4px;width:29.9px;height:1.6px;background:#76b9ed;"></div>
<div style="left:1019px;top:545px;width:1px;height:30px;background:#8a8482;"></div>
<span class="t" style="left:66px;top:553.90px;line-height:14px;font-size:11px;color:#3a3a3a;font-family:'Liberation Sans',sans-serif;letter-spacing:-0.096px;">Type here to search</span>
<span class="t" style="left:943.2px;top:547.40px;line-height:12px;font-size:9px;color:#fff;font-family:'Liberation Sans',sans-serif;letter-spacing:-0.289px;">5:46 PM</span>
<span class="t" style="left:942.3px;top:560.20px;line-height:12px;font-size:9px;color:#fff;font-family:'Liberation Sans',sans-serif;letter-spacing:-0.121px;">3/4/2020</span>
<svg style="left:0;top:545px" width="1023" height="30" viewBox="0 545 1023 30">
<!-- windows logo -->
<g fill="#fff"><path d="M12 555.7L17 555V559.6H12Z"/><path d="M17.8 554.9L24.3 554V559.6H17.8Z"/><path d="M12 560.4H17V565L12 564.3Z"/><path d="M17.8 560.4H24.3V566L17.8 565.1Z"/></g>
<!-- search icon -->
<circle cx="52.6" cy="557.6" r="3.6" fill="none" stroke="#333" stroke-width="1.1"/><path d="M50 560.4L45.6 565" stroke="#333" stroke-width="1.2"/>
<!-- cortana -->
<circle cx="311.5" cy="559.8" r="5" fill="none" stroke="#fff" stroke-width="1.6"/>
<!-- task view -->
<g fill="none" stroke="#f0f0f0" stroke-width=".8"><rect x="342.3" y="556.4" width="5.4" height="6.5"/><path d="M340.8 555H349M340.8 564.4H349M342.3 555V556.4M347.7 555V556.4M342.3 563V564.4M347.7 563V564.4M352.5 554.2V565.2" /></g><circle cx="352.5" cy="558" r="1.2" fill="#fff"/>
<!-- edge -->
<path d="M378.2 560.6C378.6 555 382 551.9 386 551.9C390.6 551.9 393.4 555.4 393.3 560.2V561.6H383.2C383.4 564 385.6 565 387.8 565C389.8 565 391.4 564.4 392.6 563.6V566.4C391.2 567.2 389.4 567.6 387 567.6C382.4 567.6 379.6 564.6 379.6 560.6C379.6 558.4 380.8 556.4 382.8 555.2C381 555.6 379.2 557.6 378.2 560.6ZM383.2 558.6H389.4C389.4 556.6 388.4 555.2 386.4 555.2C384.6 555.2 383.4 556.6 383.2 558.6Z" fill="#1e88e5"/>
<!-- folder -->
<path d="M414.2 553H420L421.4 554.6H430.4V556.4H414.2Z" fill="#e8a92e"/>
<rect x="414.2" y="555.4" width="16.2" height="10.8" fill="#ffd45e"/>
<path d="M417.6 566.2V560.4H427V566.2H424.8V562.6H419.8V566.2Z" fill="#2f8fdd"/>
<rect x="419.8" y="562.6" width="5" height="3.6" fill="#1565c0" opacity=".25"/>
<!-- store -->
<path d="M455.2 555.4V553.6A3.4 3.4 0 0 1 462 553.6V555.4" fill="none" stroke="#fff" stroke-width="1"/>
<path d="M449.8 555.2H467.6V566.4A1.4 1.4 0 0 1 466.2 567.8H451.2A1.4 1.4 0 0 1 449.8 566.4Z" fill="#fff"/>
<rect x="454.6" y="557.6" width="3.6" height="3.6" fill="#f25022"/><rect x="459" y="557.6" width="3.6" height="3.6" fill="#7fba00"/>
<rect x="454.6" y="562" width="3.6" height="3.6" fill="#00a4ef"/><rect x="459" y="562" width="3.6" height="3.6" fill="#ffb900"/>
<!-- gift -->
<rect x="486.6" y="550.8" width="18.6" height="18.2" rx="2.6" fill="#fff"/>
<g fill="#b71c1c"><rect x="489.6" y="557.4" width="5.4" height="2.6"/><rect x="496.8" y="557.4" width="5.4" height="2.6"/><rect x="490.4" y="561" width="4.6" height="5.6"/><rect x="496.8" y="561" width="4.6" height="5.6"/></g>
<path d="M495.9 557C493 556.6 491.2 555.4 491.8 554C492.6 552.6 495 553.6 495.9 557ZM495.9 557C498.8 556.6 500.6 555.4 500 554C499.2 552.6 496.8 553.6 495.9 557Z" fill="none" stroke="#b71c1c" stroke-width="1.1"/>
<!-- mail -->
<path d="M523.4 557.6L532.6 551.4L541.8 557.6V567.8H523.4Z" fill="#1976d2"/>
<path d="M525 556.6H540.2V562L532.6 566Z" fill="#fff"/>
<path d="M523.4 557.8L532.6 563.4L541.8 557.8V567.8H523.4Z" fill="#29a8f4"/>
<path d="M523.4 567.8L532.6 562.6L541.8 567.8Z" fill="#1e88e5"/>
<!-- chromium -->
<circle cx="569.1" cy="559.6" r="8.6" fill="#4c8bf0"/>
<path d="M569.1 559.6L561.6 555.4A8.6 8.6 0 0 0 565 567.2Z" fill="#3b78e0"/>
<path d="M569.1 559.6L573.4 567A8.6 8.6 0 0 0 577.6 558Z" fill="#6fa4f5"/>
<circle cx="569.1" cy="559.6" r="4.2" fill="#e8f0fe"/><circle cx="569.1" cy="559.6" r="3.3" fill="#5a96f2"/>
<!-- dev icon -->
<rect x="597" y="551.4" width="17.6" height="16.8" fill="#13265c"/>
<rect x="597.6" y="551.8" width="16.4" height="8.4" fill="#4a52ae"/>
<rect x="597.6" y="560.2" width="16.4" height="7.6" fill="#0b5fcc"/>
<path d="M601 563L604 566M604 563L601 566M606.6 563L609.6 566M609.6 563L606.6 566" stroke="#0b2a6a" stroke-width="1"/>
<!-- other app -->
<rect x="633.8" y="552.8" width="16" height="13.6" fill="#f4f4f0"/>
<rect x="636" y="555.6" width="5.6" height="8.6" fill="#6f8fd0"/><path d="M636 564.2L641.6 557.6V564.2Z" fill="#4aa860"/>
<path d="M644 556.4h2.6M644 558.6h2.6M644 560.8h2.6M644 563h2.6" stroke="#c4c8d4" stroke-width=".8"/><rect x="647.6" y="555.6" width="1.4" height="4.6" fill="#7a9ad8"/>
<!-- tray -->
<path d="M886.2 562.2L890.6 557.8L895 562.2" fill="none" stroke="#fff" stroke-width="1.1"/>
<path d="M902 558.6H904.4L907.4 555.8V565.2L904.4 562.4H902Z" fill="none" stroke="#fff" stroke-width=".9"/>
<path d="M909 558.6Q910.4 560.5 909 562.4M910.8 557Q913 560.5 910.8 564M912.6 555.6Q915.6 560.5 912.6 565.4" fill="none" stroke="#d8d8d8" stroke-width=".8"/>
<circle cx="931" cy="564.4" r="1" fill="#fff"/>
<path d="M927.4 564.8A3.8 3.8 0 0 1 931.4 560.8M925.2 564.8A6 6 0 0 1 931.4 558.6M923 564.8A8.2 8.2 0 0 1 931.4 556.4" fill="none" stroke="#bdbdbd" stroke-width=".8"/>
<!-- notification -->
<path d="M992.4 553.8H1004.4V563.6H998.4L995.6 566.4V563.6H992.4Z" fill="#fff"/>
<path d="M994.4 556.4H1002.4M994.4 558.6H1002.4M994.4 560.8H1000" stroke="#3f3836" stroke-width=".8"/>
<circle cx="1003.6" cy="564.6" r="5.2" fill="#3f3836" stroke="#fff" stroke-width="1"/>
</svg>
<span class="t" style="left:1001.6px;top:558.80px;line-height:12px;font-size:8.5px;color:#fff;font-family:'Liberation Sans',sans-serif;font-weight:bold;">1</span>
<span class="t" style="left:599.4px;top:550.60px;line-height:12px;font-size:7px;color:#fff;font-family:'Liberation Sans',sans-serif;font-weight:bold;letter-spacing:-0.403px;">DEV</span>
<svg style="left:0;top:0" width="1023" height="575" viewBox="0 0 1023 575" fill="none" stroke="#ed1c24">
<ellipse cx="175.6" cy="24.3" rx="34" ry="13.4" stroke-width="3.6" transform="rotate(-2 175.6 24.3)"/>
<path d="M171.45 48.3L182.7 60.9V62.2H177.7V74.3H165.2V62.2H160.4V60.9Z" fill="#ed1c24" stroke-width=".8" stroke-linejoin="round"/>
<path d="M171.45 53L176 58.5V59.7H174.2V70.9H168.7V59.7H167V58.5Z" fill="#fff" stroke="none"/>
<rect x="125.6" y="391.05" width="82.95" height="18.5" stroke-width="3.5"/>
<rect x="120.15" y="416.65" width="664.3" height="96.4" stroke-width="3.9"/>
</svg>
</body></html>
